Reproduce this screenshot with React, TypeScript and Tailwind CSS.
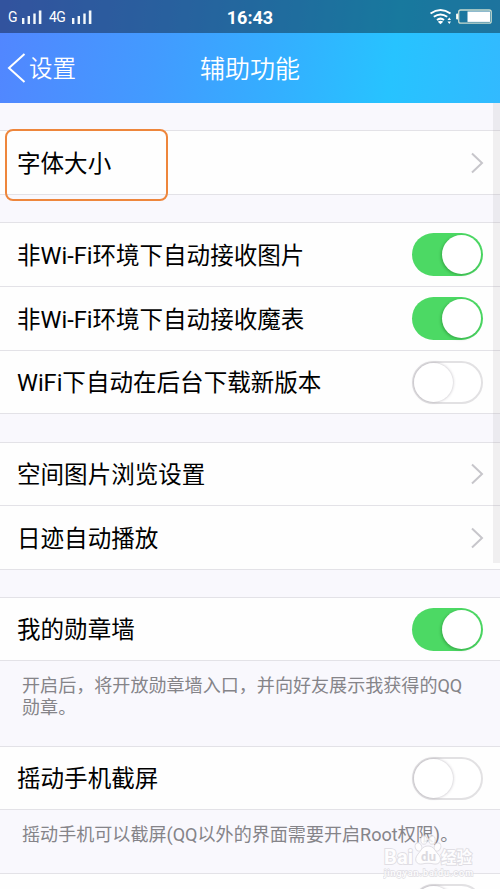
type RowProps = {
  label: string;
  control: "arrow" | "on" | "off";
  className?: string;
};

function Chevron() {
  return (
    <svg width="14" height="22" viewBox="0 0 14 22" fill="none" stroke="#c7c6cb" strokeWidth="2" className="-mr-px">
      <path d="M2 1.500 L12 11 L2 20.500" />
    </svg>
  );
}

function Toggle({ on }: { on: boolean }) {
  if (on) {
    return (
      <div className="flex h-[43px] w-[71px] shrink-0 items-center justify-end rounded-full bg-[#4cd964] pr-[2px]">
        <div className="size-[39px] rounded-full bg-white shadow-[-1px_1px_3px_rgba(0,60,0,0.3)]" />
      </div>
    );
  }
  return (
    <div className="flex h-[43px] w-[71px] shrink-0 items-center rounded-full border-2 border-[#e2e1e3] bg-white">
      <div className="size-[39px] rounded-full bg-white shadow-[0_0_3px_rgba(70,60,80,0.38)]" />
    </div>
  );
}

function Row({ label, control, className = "h-16" }: RowProps) {
  return (
    <div className={`flex items-center justify-between border-t border-[#e3e2e7] px-[17px] ${className}`}>
      <span className="pt-[4px] text-[23.55px] leading-none whitespace-nowrap text-black">{label}</span>
      {control === "arrow" ? <Chevron /> : <Toggle on={control === "on"} />}
    </div>
  );
}

function Group({ children }: { children: React.ReactNode }) {
  return <section className="shrink-0 border-b border-[#e3e2e7] bg-[#fefefe]">{children}</section>;
}

function Signal() {
  return (
    <svg width="20" height="16" viewBox="0 0 20 16" fill="#f3f8fb">
      <rect x="0" y="9" width="2.4" height="6" />
      <rect x="5.6" y="7" width="2.4" height="8" />
      <rect x="11.3" y="4.5" width="2.4" height="10.5" />
      <rect x="16.8" y="1.5" width="2.6" height="13.5" />
    </svg>
  );
}

function StatusBar() {
  return (
    <div className="relative flex h-[33px] items-center bg-black/38 text-white">
      <span className="ml-[8px] w-[14px] pt-px text-[14px]">G</span>
      <Signal />
      <span className="ml-[7px] w-[23px] pt-px text-[14px] tracking-[-0.5px]">4G</span>
      <Signal />
      <span className="absolute inset-x-0 top-px text-center text-[18px] leading-[33px] font-bold">16:43</span>
      <svg width="70" height="33" viewBox="0 0 70 33" fill="none" stroke="#fff" className="ml-auto">
        <path d="M0.500 13.500 Q10.500 6.500 20.500 13.500" strokeWidth="2" />
        <path d="M3.800 16.800 Q10.500 12 17.200 16.800" strokeWidth="2" />
        <path d="M7 20 Q10.500 17.200 14 20" strokeWidth="2" />
        <path d="M7.800 21.700 Q10.500 20 13.200 21.700 L10.500 24.200 Z" fill="#fff" stroke="none" />
        <path d="M17.500 20 L19.300 17.500 L21 20 Z M17.500 21.500 L21 21.500 L19.300 24 Z" fill="#fff" stroke="none" />
        <rect x="28.700" y="10" width="32.500" height="13.200" rx="2" stroke="#c9dccf" strokeWidth="1.300" />
        <rect x="37.500" y="11.500" width="22.500" height="10.400" fill="#fff" stroke="none" />
        <path d="M28 14 h-1.500 v5 h1.500" fill="#fff" stroke="#e5efe9" />
      </svg>
    </div>
  );
}

function Watermark() {
  return (
    <div className="absolute top-[833px] left-[383px] h-[46px] w-[95px] opacity-85">
      <svg width="95" height="46" viewBox="0 0 95 46" fill="#fff" stroke="#dcdae0" strokeWidth="1">
        <ellipse cx="35.500" cy="14" rx="3.300" ry="4.200" transform="rotate(-20 35.500 14)" />
        <ellipse cx="41" cy="7" rx="3.200" ry="4.200" />
        <ellipse cx="49" cy="7" rx="3.200" ry="4.200" />
        <ellipse cx="54.500" cy="14" rx="3.300" ry="4.200" transform="rotate(20 54.500 14)" />
        <path d="M45 13 C39 13 38 18 35 21 C30 27 34 32 39 31 C43 30 47 30 51 31 C57 32 60 26 55 21 C52 18 51 13 45 13 Z" />
        <g fontFamily="Roboto, 'Noto Sans CJK SC', sans-serif" fontWeight="700" paintOrder="stroke" strokeWidth="1.800">
          <text x="1" y="31" fontSize="20" textLength="29">Bai</text>
          <text x="38" y="28" fontSize="13" textLength="15" fill="#d6d4da" stroke="none">du</text>
          <text x="58" y="30" fontSize="15.500" textLength="31">经验</text>
        </g>
        <text x="1" y="43" fontSize="9" textLength="89" fontFamily="Roboto, sans-serif" fontWeight="500" paintOrder="stroke" strokeWidth="1.400">jingyan.baidu.com</text>
      </svg>
    </div>
  );
}

export default function App() {
  return (
    <div className="relative flex h-[889px] w-[500px] flex-col overflow-hidden bg-[#f9f8fd] font-[Roboto,'Noto_Sans_CJK_SC',sans-serif]">
      <header className="h-[103px] shrink-0 bg-[linear-gradient(98deg,#5286ff_0%,#429bff_32%,#35adff_54%,#27c3ff_78%,#32baff_100%)]">
        <StatusBar />
        <div className="relative flex h-[70px] items-center text-white">
          <svg width="20" height="32" viewBox="0 0 20 32" fill="none" stroke="#fff" strokeWidth="2" className="ml-[7px]">
            <path d="M17.500 2 L2 16 L17.500 30" />
          </svg>
          <span className="ml-[2px] pt-[3px] text-[23.5px] leading-none font-[350]">设置</span>
          <h1 className="absolute inset-x-0 top-[2px] text-center text-[25px] leading-[70px] font-[350]">辅助功能</h1>
        </div>
      </header>

      <main className="flex flex-1 flex-col overflow-hidden pt-[27px]">
        <Group>
          <Row label="字体大小" control="arrow" />
        </Group>
        <div className="h-[27px] shrink-0" />
        <Group>
          <Row label="非Wi-Fi环境下自动接收图片" control="on" />
          <Row label="非Wi-Fi环境下自动接收魔表" control="on" />
          <Row label="WiFi下自动在后台下载新版本" control="off" className="h-[63px]" />
        </Group>
        <div className="h-[28px] shrink-0" />
        <Group>
          <Row label="空间图片浏览设置" control="arrow" className="h-[63px]" />
          <Row label="日迹自动播放" control="arrow" />
        </Group>
        <div className="h-[27px] shrink-0" />
        <Group>
          <Row label="我的勋章墙" control="on" className="h-[63px]" />
        </Group>
        <p className="h-[85px] shrink-0 pt-[14px] pr-[30px] pl-[22px] text-[18.07px] leading-[21.5px] text-[#858489]">
          开启后，将开放勋章墙入口，并向好友展示我获得的QQ勋章。
        </p>
        <Group>
          <Row label="摇动手机截屏" control="off" className="h-[63px]" />
        </Group>
        <p className="h-[63px] shrink-0 pt-[14px] pl-[22px] text-[18.07px] leading-[21.5px] whitespace-nowrap text-[#858489]">
          摇动手机可以截屏(QQ以外的界面需要开启Root权限)。
        </p>
        <Group>
          <Row label="" control="off" />
        </Group>
      </main>

      {/* scroll thumb */}
      <div className="absolute top-[103px] right-0 h-[460px] w-[7px] bg-[#9a929d]/14" />
      {/* highlight round the first entry */}
      <div className="absolute top-[129px] left-[5px] h-[72px] w-[163px] rounded-[8px] border-2 border-[#ee863c]" />
      <Watermark />
    </div>
  );
}
